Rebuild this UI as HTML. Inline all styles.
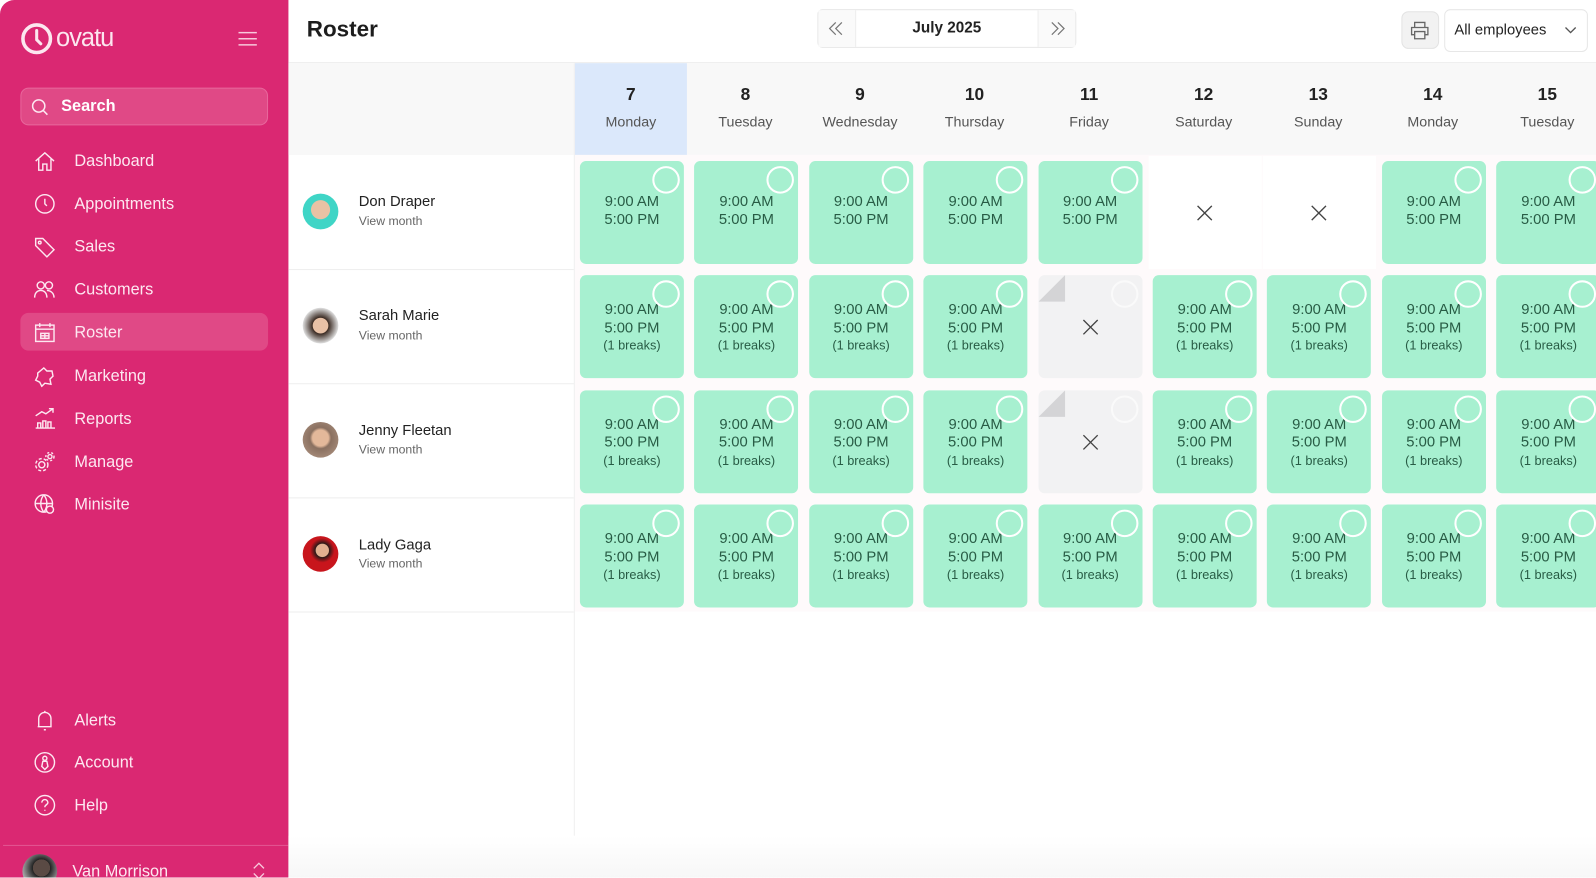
<!DOCTYPE html>
<html><head><meta charset="utf-8">
<style>
*{box-sizing:border-box;margin:0;padding:0}
html,body{width:1596px;height:877px;overflow:hidden;background:#fff;font-family:"Liberation Sans",sans-serif}
#wrap{position:absolute;left:0;top:0;width:1566px;height:861px;transform:scale(1.0192);transform-origin:0 0;background:#fff}
.a{position:absolute}
#side{left:0;top:0;width:283px;height:861px;background:#da2872;border-top-left-radius:14px;overflow:hidden;color:#fbe3ee}
.nav{position:absolute;left:20px;width:243px;height:37px;font-size:16px;color:#fde8f1}
.nav span{position:absolute;left:53px;top:11px}
.nav svg{position:absolute;left:13px;top:8px}
.cell{position:absolute;width:102px;height:101px;background:#a7f0d0;border-radius:6px;overflow:hidden;color:#285c45;font-size:14.5px;text-align:center}
.cell .c{position:absolute;right:4px;top:5px;width:27px;height:27px;border:2.5px solid #fff;border-radius:50%}
.cell .t{position:absolute;left:0;right:0;top:33px;line-height:17.5px}
.cell small{font-size:12.5px}
.off{background:#f2f2f3}
.off .c{border-color:#fafafa}
.x{position:absolute;width:16px;height:16px}
.hd{position:absolute;top:62px;width:112px;height:90px;text-align:center;color:#222}
.hd b{display:block;margin-top:21px;font-size:17px}
.hd div{margin-top:8px;font-size:14px;color:#555}
.emp{position:absolute;left:297px;width:260px;white-space:nowrap}
.av{position:absolute;left:0;width:35px;height:35px;border-radius:50%}
.nm{position:absolute;left:55px;font-size:14.5px;color:#222}
.vm{position:absolute;left:55px;font-size:12px;color:#666}
</style></head><body>
<div id="wrap">
<div id="side" class="a">
  <svg class="a" style="left:20px;top:22px" width="32" height="32" viewBox="0 0 32 32"><circle cx="16" cy="16" r="13.5" fill="none" stroke="#fce6ef" stroke-width="3.5"/><path d="M16 8v9l4 4" fill="none" stroke="#fce6ef" stroke-width="3" stroke-linecap="round"/></svg>
  <div class="a" style="left:55px;top:23px;font-size:25px;color:#fce6ef;letter-spacing:-1px">ovatu</div>
  <svg class="a" style="left:233px;top:31px" width="20" height="14"><path d="M1 1h18M1 7h18M1 13h18" stroke="#f8c9dc" stroke-width="1.5"/></svg>
  <div class="a" style="left:20px;top:86px;width:243px;height:37px;background:#e04986;border:1px solid #e8679c;border-radius:8px">
    <svg class="a" style="left:9px;top:9px" width="18" height="18"><circle cx="8" cy="8" r="6" fill="none" stroke="#fde8f1" stroke-width="1.5"/><path d="M12.5 12.5l4 4" stroke="#fde8f1" stroke-width="1.5"/></svg>
    <span class="a" style="left:39px;top:9px;font-size:16px;color:#fff;font-weight:bold">Search</span>
  </div>
  <div class="nav" style="top:139px"><svg width="22" height="22" viewBox="0 0 22 22" fill="none" stroke="#fde8f1" stroke-width="1.4"><path d="M2 11L11 3l9 8M5 9v11h4v-6h4v6h4V9"/></svg><span>Dashboard</span></div>
  <div class="nav" style="top:181px"><svg width="22" height="22" viewBox="0 0 22 22" fill="none" stroke="#fde8f1" stroke-width="1.4"><circle cx="11" cy="11" r="9"/><path d="M11 6v5l2 2"/></svg><span>Appointments</span></div>
  <div class="nav" style="top:223px"><svg width="22" height="22" viewBox="0 0 22 22" fill="none" stroke="#fde8f1" stroke-width="1.4"><path d="M2 10V3h7l11 11-7 7z"/><circle cx="6" cy="7" r="1.3"/></svg><span>Sales</span></div>
  <div class="nav" style="top:265px"><svg width="22" height="22" viewBox="0 0 22 22" fill="none" stroke="#fde8f1" stroke-width="1.4"><circle cx="7" cy="7" r="3.5"/><circle cx="15" cy="7" r="3.5"/><path d="M1 19c0-5 3-7 6-7s6 2 6 7M13 12c3 0 7 2 7 7"/></svg><span>Customers</span></div>
  <div class="a" style="left:20px;top:307px;width:243px;height:37px;background:#e04986;border-radius:8px"></div>
  <div class="nav" style="top:307px"><svg width="22" height="22" viewBox="0 0 22 22" fill="none" stroke="#fde8f1" stroke-width="1.4"><rect x="2" y="4" width="18" height="16"/><path d="M6 2v4M16 2v4M2 8h18M7 12h8v5H7zM11 12v5M7 14.5h8"/></svg><span>Roster</span></div>
  <div class="nav" style="top:350px"><svg width="22" height="22" viewBox="0 0 22 22" fill="none" stroke="#fde8f1" stroke-width="1.4"><path d="M4 8l6-5 3 3 5 0 1 5-3 3 1 5-6-1-3 3-2-4-4-2 2-4z"/></svg><span>Marketing</span></div>
  <div class="nav" style="top:392px"><svg width="22" height="22" viewBox="0 0 22 22" fill="none" stroke="#fde8f1" stroke-width="1.4"><path d="M2 8l6-4 4 2 7-5M15 1h4v4M2 20h19M4 20v-5h3v5M9 20v-7h3v7M14 20v-6h3v6"/></svg><span>Reports</span></div>
  <div class="nav" style="top:434px"><svg width="22" height="22" viewBox="0 0 22 22" fill="none" stroke="#fde8f1" stroke-width="1.4"><circle cx="8" cy="14" r="3"/><circle cx="8" cy="14" r="6" stroke-dasharray="3 2"/><circle cx="16" cy="6" r="2"/><circle cx="16" cy="6" r="4" stroke-dasharray="2 2"/></svg><span>Manage</span></div>
  <div class="nav" style="top:476px"><svg width="22" height="22" viewBox="0 0 22 22" fill="none" stroke="#fde8f1" stroke-width="1.4"><circle cx="10" cy="10" r="8.5"/><path d="M1.5 10h17M10 1.5c-4 5-4 12 0 17M10 1.5c4 5 4 12 0 17"/><circle cx="16" cy="16" r="3.5" fill="#da2872"/></svg><span>Minisite</span></div>
  <div class="nav" style="top:688px"><svg width="22" height="22" viewBox="0 0 22 22" fill="none" stroke="#fde8f1" stroke-width="1.4"><path d="M5 17V9a6 6 0 0112 0v8H4M11 3V1.5M10 20h2"/></svg><span>Alerts</span></div>
  <div class="nav" style="top:729px"><svg width="22" height="22" viewBox="0 0 22 22" fill="none" stroke="#fde8f1" stroke-width="1.4"><circle cx="11" cy="11" r="9.5"/><circle cx="11" cy="7" r="2"/><path d="M9 10h4l1 5-3 3-3-3z"/></svg><span>Account</span></div>
  <div class="nav" style="top:771px"><svg width="22" height="22" viewBox="0 0 22 22" fill="none" stroke="#fde8f1" stroke-width="1.4"><circle cx="11" cy="11" r="9.5"/><path d="M8 8.5a3 3 0 116 0c0 2-3 2-3 4.5M11 15.5v1"/></svg><span>Help</span></div>
  <div class="a" style="left:3px;top:829px;width:280px;height:1px;background:#e35593"></div>
  <div class="a" style="left:22px;top:838px;width:34px;height:34px;border-radius:50%;background:radial-gradient(circle at 55% 40%,#5a4a44 0 30%,#222 31%,#aaa 70%)"></div>
  <div class="a" style="left:71px;top:847px;font-size:16px;color:#fde8f1">Van Morrison</div>
  <svg class="a" style="left:247px;top:846px" width="14" height="16"><path d="M2 6l5-5 5 5M2 11l5 5 5-5" fill="none" stroke="#f8c9dc" stroke-width="1.3"/></svg>
</div>

<!-- header -->
<div class="a" style="left:301px;top:16px;font-size:22px;font-weight:bold;color:#1d1d1d">Roster</div>
<div class="a" style="left:802px;top:9px;width:254px;height:38px;border:1px solid #e7e7e7;border-radius:5px;background:#fff"></div>
<div class="a" style="left:803px;top:10px;width:37px;height:36px;background:#fafafa;border-right:1px solid #eee"></div>
<div class="a" style="left:1018px;top:10px;width:37px;height:36px;background:#fafafa;border-left:1px solid #eee"></div>
<svg class="a" style="left:813px;top:21px" width="14" height="14" fill="none" stroke="#777" stroke-width="1.2"><path d="M7 1L1 7l6 6M13 1L7 7l6 6"/></svg>
<svg class="a" style="left:1031px;top:21px" width="14" height="14" fill="none" stroke="#777" stroke-width="1.2"><path d="M1 1l6 6-6 6M7 1l6 6-6 6"/></svg>
<div class="a" style="left:840px;top:19px;width:178px;text-align:center;font-size:15px;font-weight:bold;color:#222">July 2025</div>
<div class="a" style="left:1375px;top:11px;width:37px;height:37px;background:#f2f2f2;border:1px solid #e3e3e3;border-radius:7px"></div>
<svg class="a" style="left:1384px;top:21px" width="18" height="18" viewBox="0 0 18 18" fill="none" stroke="#666" stroke-width="1.3"><path d="M4 6V1h10v5M4 13H1V6h16v7h-3M4 10h10v7H4z"/></svg>
<div class="a" style="left:1417px;top:9px;width:141px;height:42px;border:1px solid #e7e7e7;border-radius:6px"></div>
<div class="a" style="left:1427px;top:22px;font-size:14.5px;color:#222">All employees</div>
<svg class="a" style="left:1535px;top:26px" width="12" height="8"><path d="M1 1l5 5 5-5" fill="none" stroke="#555" stroke-width="1.3"/></svg>
<div class="a" style="left:283px;top:61px;width:1283px;height:1px;background:#ececec"></div>

<!-- grid background -->
<div class="a" style="left:283px;top:62px;width:1283px;height:90px;background:#f8f8f8"></div>
<div class="a" style="left:564px;top:62px;width:110px;height:90px;background:#dbe8fb"></div>
<div class="a" style="left:564px;top:152px;width:1002px;height:448px;background:#fefafb"></div>
<div class="a" style="left:563px;top:62px;width:1px;height:799px;background:#f0f0f0"></div>
<div class="a" style="left:283px;top:264px;width:280px;height:1px;background:#eee"></div>
<div class="a" style="left:283px;top:376px;width:280px;height:1px;background:#eee"></div>
<div class="a" style="left:283px;top:488px;width:280px;height:1px;background:#eee"></div>
<div class="a" style="left:283px;top:600px;width:280px;height:1px;background:#eee"></div>
<div class="a" style="left:283px;top:820px;width:1283px;height:41px;background:linear-gradient(#fff,#f7f7f7)"></div>

<div class="emp" style="top:190px"><div class="av" style="background:radial-gradient(circle at 50% 45%,#e9c2a4 0 35%,#3fd5c6 37%)"></div><div class="nm" style="top:0">Don Draper</div><div class="vm" style="top:20px">View month</div></div>
<div class="emp" style="top:302px"><div class="av" style="background:radial-gradient(circle at 50% 50%,#e8c1a6 0 30%,#3a2a22 32%,#ddd 70%)"></div><div class="nm" style="top:0">Sarah Marie</div><div class="vm" style="top:20px">View month</div></div>
<div class="emp" style="top:414px"><div class="av" style="background:radial-gradient(circle at 50% 45%,#e3b89a 0 30%,#8a7060 40%,#b59a88)"></div><div class="nm" style="top:1px">Jenny Fleetan</div><div class="vm" style="top:20px">View month</div></div>
<div class="emp" style="top:526px"><div class="av" style="background:radial-gradient(circle at 55% 40%,#e2b090 0 22%,#2a1a18 24%,#c8151c 42%)"></div><div class="nm" style="top:1px">Lady Gaga</div><div class="vm" style="top:20px">View month</div></div>

<div id="g"></div>
</div>
<script>
var days=[[7,"Monday"],[8,"Tuesday"],[9,"Wednesday"],[10,"Thursday"],[11,"Friday"],[12,"Saturday"],[13,"Sunday"],[14,"Monday"],[15,"Tuesday"]];
var X='<svg width="16" height="16"><path d="M1 1l14 14M15 1L1 15" stroke="#444" stroke-width="1.3"/></svg>';
var h="";
for(var i=0;i<9;i++){
  var x=564+i*112.4;
  h+='<div class="hd" style="left:'+(x-1)+'px"><b>'+days[i][0]+'</b><div>'+days[i][1]+'</div></div>';
  for(var r=0;r<4;r++){
    var y=152+r*112.4+6;
    var cx=x+5;
    if(r==0&&(i==5||i==6)){
      h+='<div class="a" style="left:'+(x+1)+'px;top:'+(y-5)+'px;width:111px;height:111px;background:#fff"></div><div class="x" style="left:'+(cx+43)+'px;top:'+(y+43)+'px">'+X+'</div>';
      continue;
    }
    if((r==1||r==2)&&i==4){
      h+='<div class="cell off" style="left:'+cx+'px;top:'+y+'px"><div class="c"></div><svg class="a" style="left:0;top:0" width="28" height="28"><path d="M0 26L26 0v26z" fill="#d4d4d6"/></svg><div class="x" style="left:43px;top:43px">'+X+'</div></div>';
      continue;
    }
    var t=r==0?'<div class="t" style="top:32px">9:00 AM<br>5:00 PM</div>':'<div class="t" style="top:26px">9:00 AM<br>5:00 PM<br><small>(1 breaks)</small></div>';
    h+='<div class="cell" style="left:'+cx+'px;top:'+y+'px">'+t+'<div class="c"></div></div>';
  }
}
document.getElementById("g").innerHTML=h;
</script>
</body></html>
